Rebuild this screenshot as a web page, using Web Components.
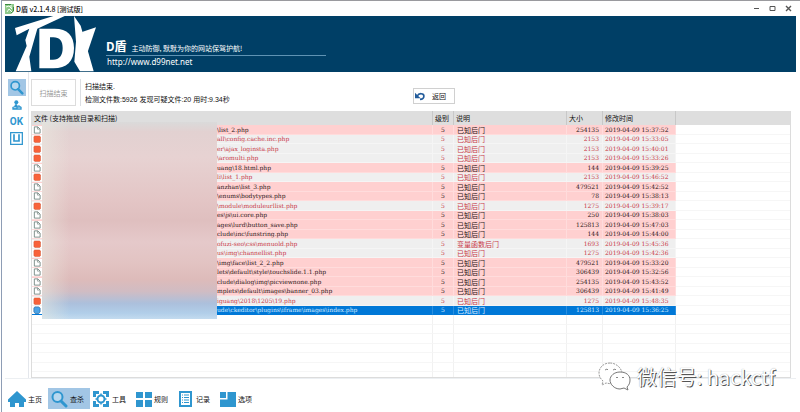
<!DOCTYPE html>
<html lang="zh-CN">
<head>
<meta charset="utf-8">
<title>D盾 v2.1.4.8 [测试版]</title>
<style>
  html, body { height: 100%; margin: 0; }
  body {
    background: #fff;
    color: #222;
    font: 7px/10px "Liberation Sans", "Noto Sans CJK SC", sans-serif;
    --accent: #2f96cf;
    --picked: #a2c6e5;
    --navy: #003f66;
  }
</style>
</head>
<body>
<app-window></app-window>

<script>
const define = (name, html, init) => customElements.define(name, class extends HTMLElement {
  constructor() {
    super();
    this.attachShadow({ mode: 'open' }).innerHTML = html;
  }
  connectedCallback() { if (init) init.call(this, this.shadowRoot); }
});

const icons = {
  search: '<circle cx="7.5" cy="7" r="5" fill="#b9d8ef" stroke="currentColor" stroke-width="2"/><path d="M11 11l5 5" stroke="currentColor" stroke-width="3" stroke-linecap="round"/>',
  home: '<path fill="currentColor" d="M9 1L18 9.500V12h-2v5h-5v-4H7v4H2v-5H0V9.500z"/>',
  tool: '<path fill="currentColor" d="M1 1h6v3H4v3H1zM11 1h6v6h-3V4h-3zM1 11h3v3h3v3H1zM14 11h3v6h-6v-3h3z"/><circle cx="9" cy="9" r="3.500" fill="none" stroke="currentColor" stroke-width="2"/><path stroke="currentColor" stroke-width="1.500" d="M9 3.500v2M9 12.500v2M3.500 9h2M12.500 9h2"/>',
  grid: '<path fill="currentColor" d="M2 2h7v6H2zM11 2h7v6h-7zM2 10h7v7H2zM11 10h7v7h-7z"/>',
  record: '<path fill="none" stroke="currentColor" stroke-width="2" d="M4 2h11v14H4z"/><path fill="none" stroke="currentColor" d="M6 5h1M8 5h5M6 7.500h1M8 7.500h5M6 10h1M8 10h5M6 12.500h1M8 12.500h5"/>',
  option: '<path fill="currentColor" d="M2 2h6v6H2zM9.500 2H18v15H2V9.500h7.500z"/>',
  person: '<g fill="currentColor"><circle cx="8" cy="5" r="3"/><path d="M6 8h3l1 3 3-1 3 2v4H2v-4l3-1z"/></g><path stroke="#fff" d="M4 13h4M10 13.500h4"/><path fill="#82bde2" d="M10 9h3v2h-3z"/>',
  frame: '<path fill="none" stroke="currentColor" stroke-width="1.500" d="M2 2h14v14H2z"/><path fill="none" stroke="currentColor" stroke-width="2" d="M6 4v8h6V4"/>',
  undo: '<path fill="none" stroke="#235c9b" stroke-width="3" d="M4 9c3-6 12-5 12 0 0 4-3 6-7 6"/><path fill="#235c9b" d="M0 3v10h10z"/>',
  page: '<path fill="#fff" stroke="#73857f" stroke-width="2" d="M3 2h8l5 5v9H3z"/><path fill="none" stroke="#73857f" stroke-width="1.500" d="M10 2v5h5"/>',
  alert: '<path fill="#f8623a" stroke="#c9512f" d="M3 2h12l2 3v9l-2 3H4l-2-3V5z"/>',
  active: '<path fill="#4ba3e6" stroke="#24649c" stroke-width="1.500" d="M4 2h9l3 3v8l-3 4H5l-3-4V5z"/>',
};

define('ui-icon', `
  <style>
    :host { display: block; flex: none; width: var(--size, 18px); height: var(--size, 18px); color: var(--accent); }
    svg { display: block; width: 100%; height: 100%; }
  </style>
  <svg viewBox="0 0 18 18" aria-hidden="true"></svg>`,
  function (root) { root.querySelector('svg').innerHTML = icons[this.getAttribute('name')]; });

define('title-bar', `
  <style>
    :host { display: flex; align-items: center; gap: 5px; height: 15px; padding: 0 6px 0 3px; border-top: 1px solid #9a9a9e; color: #111; }
    svg { display: block; flex: none; }
    h1 { flex: 1; margin: 0 0 0 -3px; font: 500 7px/12px "Noto Sans CJK SC", sans-serif; }
    button { display: grid; place-items: center; width: 11px; height: 11px; padding: 0; border: 0; background: none; color: #555; }
  </style>
  <svg width="9" height="10" viewBox="0 0 9 10" aria-hidden="true"><path fill="#8ec98b" d="M0 0h9v7L6 10H0z"/><path stroke="#f3fff2" fill="none" d="M1 3l3-1 3 3M2 8l2-3 3 3M6 1v3"/><path stroke="#3c8b41" fill="none" d="M0 .5h6M8.500 3v4L6 9"/></svg>
  <h1><slot></slot></h1>
  <button aria-label="最小化"><svg width="7" height="7"><path stroke="currentColor" d="M1 3.500h5"/></svg></button>
  <button aria-label="最大化"><svg width="7" height="7"><path fill="none" stroke="currentColor" d="M1 1.500h5v4H1z"/></svg></button>
  <button aria-label="关闭"><svg width="7" height="7"><path stroke="currentColor" stroke-width="1.400" d="M1 1l5 5M6 1L1 6"/></svg></button>`);

define('brand-banner', `
  <style>
    :host { display: flex; height: 56px; background: var(--navy); color: #fff; }
    svg { display: block; flex: none; }
    .words { width: 220px; margin-left: 6px; padding-top: 23px; }
    .line { display: flex; align-items: flex-end; gap: 5px; padding-bottom: 2px; border-bottom: 1px solid #5f93b4; }
    strong { font: 700 12px/14px "Noto Sans CJK SC", sans-serif; }
    .tag { font: 400 7px/9px "Noto Sans CJK SC", sans-serif; white-space: nowrap; }
    a { display: block; color: inherit; text-decoration: none; padding-left: 1px; font: 8px/12px "Noto Sans", sans-serif; }
  </style>
  <svg width="95" height="56" viewBox="15 48 285 168" aria-label="D" role="img">
    <g fill="#fff">
      <path d="M45 84L160 48h34L112 86l-24 84 6 44H47l33-76-4-18 12-34-38 20z"/>
      <path fill-rule="evenodd" d="M118 86h46c38 0 58 21 58 58 0 40-22 61-62 61h-42zM150 112v67h9c19 0 29-12 29-35 0-21-9-32-28-32z"/>
      <path d="M222 48l20 29 39 137h-41l-17-29 5-60z"/>
      <path d="M246 96l42-14-30 88z"/>
    </g>
  </svg>
  <div class="words">
    <div class="line"><strong>D盾</strong><span class="tag">主动防御, 默默为你的网站保驾护航!</span></div>
    <a href="http://www.d99net.net">http://www.d99net.net</a>
  </div>`);

define('side-nav', `
  <style>
    :host { display: block; box-sizing: border-box; width: 24px; padding-top: 7px; border-right: 1px solid #e4e7ec; }
    nav { display: flex; flex-direction: column; align-items: center; }
    button { display: grid; place-items: center; width: 18px; height: 17px; padding: 0; border: 0; background: none; color: var(--accent); font: 700 10px/16px "Roboto", sans-serif; }
    button[aria-current] { background: var(--picked); }
    ui-icon { --size: 15px; }
    .small { --size: 12px; }
  </style>
  <nav aria-label="侧栏">
    <button aria-label="查杀" aria-current="true"><ui-icon name="search"></ui-icon></button>
    <button aria-label="用户"><ui-icon class="small" name="person"></ui-icon></button>
    <button>OK</button>
    <button aria-label="选框"><ui-icon name="frame"></ui-icon></button>
  </nav>`);

define('scan-status', `
  <style>
    :host { display: flex; align-items: flex-start; padding: 7px 0 5px; }
    button { font: 7px/10px "Noto Sans CJK SC", sans-serif; background: #fff; padding: 0; }
    .done { width: 45px; height: 27px; border: 1px solid #dcdcdc; color: #999; }
    .info { width: 324px; margin-left: 4px; padding: 1px 0 0 4px; border-left: 1px solid #dcdfe3; }
    p { margin: 0; font: 7px/13px "Liberation Sans", "Noto Sans CJK SC", sans-serif; color: #111; }
    .back { display: flex; align-items: center; gap: 7px; width: 42px; height: 16px; margin: 9px 0 0 4px; padding-left: 1px; border: 1px solid #d0d0d0; color: #111; }
    .back ui-icon { --size: 10px; }
  </style>
  <button class="done" disabled>扫描结束</button>
  <div class="info"><p>扫描结束.</p><p>检测文件数:5926 发现可疑文件:20 用时:9.34秒</p></div>
  <button class="back"><ui-icon name="undo"></ui-icon>返回</button>`);

/* path tail, kind (h: highlighted, r: red, s: selected), size, time, description */
const files = [
  ['\\list_2.php', 'h', 254135, '15:37:52'],
  ['all\\config.cache.inc.php', 'r', 2153, '15:33:05'],
  ['er\\ajax_loginsta.php', 'r', 2153, '15:40:01'],
  ['\\aromulti.php', 'r', 2153, '15:33:26'],
  ['uang\\18.html.php', 'h', 144, '15:39:25'],
  ['li\\list_1.php', 'r', 2153, '15:46:52'],
  ['anzhan\\list_3.php', 'h', 479521, '15:42:52'],
  ['\\enums\\bodytypes.php', 'h', 78, '15:38:13'],
  ['\\module\\moduleurllist.php', 'r', 1275, '15:39:17'],
  ['es\\js\\ui.core.php', 'h', 250, '15:38:03'],
  ['ages\\lurd\\button_save.php', 'h', 125813, '15:47:03'],
  ['clude\\inc\\funstring.php', 'h', 144, '15:44:00'],
  ['ofuzi-seo\\css\\menuold.php', 'r', 1693, '15:45:36', '变量函数后门'],
  ['us\\img\\channellist.php', 'r', 1275, '15:42:36'],
  ['\\img\\face\\list_2_2.php', 'h', 479521, '15:33:20'],
  ['lets\\default\\style\\touchslide.1.1.php', 'h', 306439, '15:32:56'],
  ['clude\\dialog\\img\\picviewnone.php', 'h', 254135, '15:43:52'],
  ['mplets\\default\\images\\banner_03.php', 'h', 306439, '15:41:49'],
  ['iguang\\2018\\1205\\19.php', 'r', 1275, '15:48:35'],
  ['ude\\ckeditor\\plugins\\iframe\\images\\index.php', 's', 125813, '15:36:25'],
];
const fileIcon = { h: 'page', r: 'alert', s: 'active' };

define('result-table', `
  <style>
    :host { display: block; position: relative; flex: 1; min-height: 0; overflow: hidden; border: 1px solid #dcdcdc; border-top: 0; }
    table { width: 100%; table-layout: fixed; border-collapse: separate; border-spacing: 0; }
    th, td { box-sizing: border-box; padding: 0; overflow: hidden; white-space: nowrap; text-align: left; }
    th { height: 14px; padding-left: 2px; background: #dedede; border-right: 1px solid #c8c8c8; font: 7px/13px "Noto Sans CJK SC", sans-serif; color: #111; }
    th:last-child { border-right: 0; }
    td { height: 10px; padding-left: 2px; border-right: 1px solid #f1f1f1; border-bottom: 1px solid #f6f6f6; font: 6px/8px "DejaVu Serif", serif; }
    tr:nth-child(even) td { height: 9px; }
    td:last-child { border-right: 0; }
    td.level { text-align: center; padding: 0; }
    td.size { text-align: right; padding: 0 3px 0 0; }
    td.desc { font: 7px/8px "Noto Sans CJK SC", sans-serif; padding-left: 3px; }
    .h { color: #2c1717; }
    .h td:not(:last-child) { background: #ffd0d0; border-color: #ffdcdc; }
    .r { color: #c93a48; }
    .r td:not(:last-child) { background: #efefef; border-color: #f5f5f5; }
    .s { color: #d7ecff; }
    .s td:not(:last-child) { background: #0078d7; border-color: #2b8fde; border-bottom-color: #0078d7; }
    td:first-child { padding-left: 0; }
    .name { display: flex; align-items: center; height: 8px; }
    .lead { flex: none; display: grid; place-items: center; width: 10px; height: 8px; margin-right: 175px; background: #fff; box-shadow: 0 1px 0 #fff; }
    td ui-icon { --size: 8px; }
    .haze {
      position: absolute; left: 10px; top: 11px; width: 175px; height: 197px;
      background:
        linear-gradient(90deg, rgba(235,235,225,.55), rgba(235,235,225,0) 16%),
        linear-gradient(#dadada, #e2d1d1 5%, #e7d2d2 18%, #e3c5c5 40%, #dfbfbf 50%, #e5c9ca 61%, #e2c3c2 72%, #ddbbba 80%, #d0bcc3 86%, #acc0dc 92%, #b1cee9 97%, #c3dbef);
    }
  </style>
  <table>
    <colgroup><col style="width:401px"><col style="width:21px"><col style="width:113px"><col style="width:36px"><col style="width:73px"><col></colgroup>
    <thead><tr><th>文件 (支持拖放目录和扫描)</th><th>级别</th><th>说明</th><th>大小</th><th>修改时间</th><th></th></tr></thead>
    <tbody></tbody>
  </table>
  <div class="haze"></div>`,
  function (root) {
    const rows = files.map(([path, kind, size, time, desc = '已知后门']) => `
      <tr class="${kind}"><td><div class="name"><span class="lead"><ui-icon name="${fileIcon[kind]}"></ui-icon></span>${path}</div></td>
      <td class="level">5</td><td class="desc">${desc}</td><td class="size">${size}</td><td>2019-04-09 ${time}</td><td></td></tr>`);
    const blank = '<tr>' + '<td></td>'.repeat(6) + '</tr>';
    root.querySelector('tbody').innerHTML = rows.join('') + blank.repeat(7);
  });

define('bottom-nav', `
  <style>
    :host { display: block; padding: 9px 0 3px 1px; }
    nav { display: flex; }
    button { display: flex; align-items: center; gap: 2px; width: 42px; height: 21px; padding: 0 2px; border: 0; background: none; color: #111; font: 7px/10px "Noto Sans CJK SC", sans-serif; white-space: nowrap; }
    button[aria-current] { background: var(--picked); }
  </style>
  <nav aria-label="主导航"></nav>`,
  function (root) {
    const items = [['home', '主页'], ['search', '查杀'], ['tool', '工具'], ['grid', '规则'], ['record', '记录'], ['option', '选项']];
    root.querySelector('nav').innerHTML = items.map(([icon, label]) =>
      `<button${icon === 'search' ? ' aria-current="page"' : ''}><ui-icon name="${icon}"></ui-icon>${label}</button>`).join('');
  });

define('account-mark', `
  <style>
    :host { position: absolute; right: 25px; bottom: 20px; display: flex; align-items: center; gap: 6px; color: #fff; font: 20px/28px "Noto Sans CJK SC", sans-serif; white-space: nowrap; text-shadow: 1px 1px 0 #555, 0 0 1px #999; }
    svg { display: block; }
  </style>
  <svg width="33" height="30" viewBox="0 0 33 30" aria-hidden="true">
    <path fill="#fff" stroke="#999" stroke-dasharray="2 1" d="M12 1C5 1 1 6 1 11c0 4 2 6 4 8l-1 4 4-2 6 1c7 0 10-4 10-10S18 1 12 1z"/>
    <path fill="#fff" stroke="#777" d="M22 10c-6 0-10 4-10 8s4 9 10 9l4-1 4 2-1-3c2-2 3-4 3-7 0-5-4-8-10-8z"/>
    <path stroke="#888" fill="none" d="M7 8l2-1 1 1M15 8l2-1 1 1M18 16l1-1 1 1M24 16l1-1 1 1"/>
  </svg>
  <slot></slot>`);

define('app-window', `
  <style>
    :host { position: relative; display: flex; flex-direction: column; box-sizing: border-box; height: 100%; padding-right: 4px; background: #fff; }
    .frame { flex: 1; display: flex; flex-direction: column; min-height: 0; margin-left: 1px; border-left: 1px solid #8e9db5; padding-left: 3px; }
    title-bar { margin: 0 -4px 0 -3px; }
    .work { flex: 1; display: flex; min-height: 0; gap: 2px; border-bottom: 1px solid #eceff2; }
    main { flex: 1; min-width: 0; display: flex; flex-direction: column; padding-right: 5px; }
  </style>
  <div class="frame">
    <title-bar>D盾 v2.1.4.8 [测试版]</title-bar>
    <brand-banner></brand-banner>
    <div class="work">
      <side-nav></side-nav>
      <main><scan-status></scan-status><result-table></result-table></main>
    </div>
    <bottom-nav></bottom-nav>
  </div>
  <account-mark>微信号: hackctf</account-mark>`);
</script>
</body>
</html>
